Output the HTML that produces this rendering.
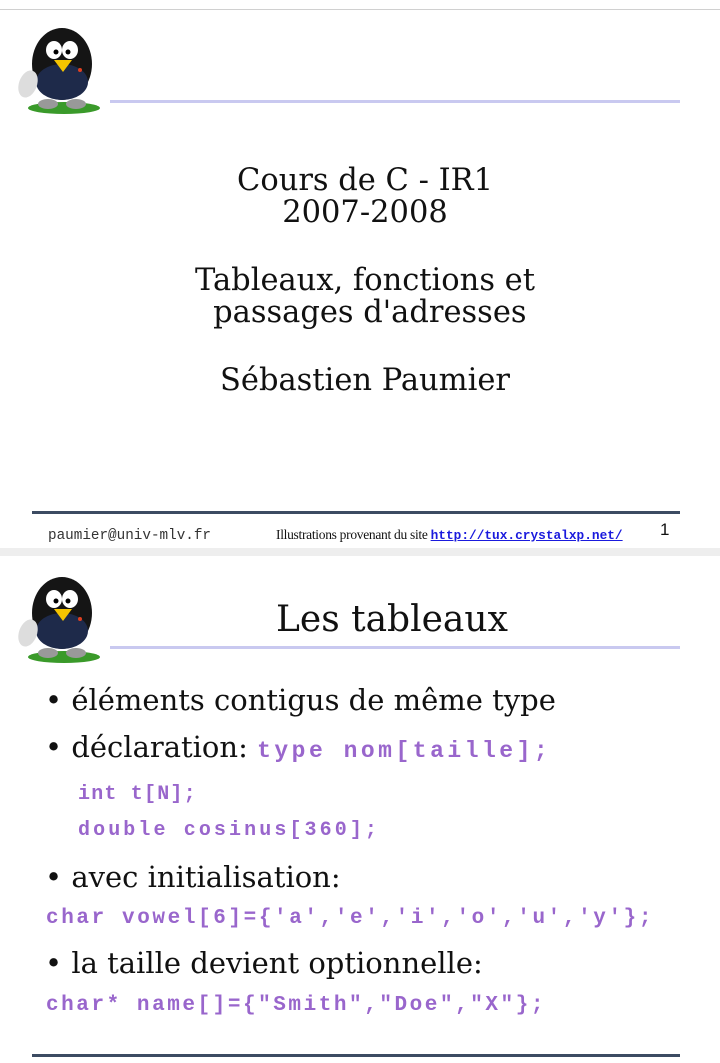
<!DOCTYPE html>
<html><head><meta charset="utf-8"><style>
*{margin:0;padding:0}
body{width:720px;height:1063px;position:relative;background:#fff;overflow:hidden;font-family:"DejaVu Serif","Liberation Serif",serif;color:#111}
.a{position:absolute;white-space:nowrap;line-height:32px}
.c{left:0;width:730px;text-align:center;font-size:30.5px}
.b{font-size:29px}
.m{font-family:"Liberation Mono",monospace;font-weight:bold;color:#9966cc}
.hl{position:absolute;left:110px;width:570px;height:3px;background:#c9c9f0}
.dl{position:absolute;left:32px;width:648px;height:3px;background:#3c4b62}
</style></head><body>
<div style="position:absolute;left:0;top:9px;width:720px;height:1px;background:#d0d0d0"></div>
<div style="position:absolute;left:0;top:548px;width:720px;height:8px;background:#eeeeee"></div>

<svg style="position:absolute;left:16px;top:20px" width="96" height="96" viewBox="0 0 96 96">
<ellipse cx="48" cy="88" rx="36" ry="6" fill="#3a9a2a"/>
<ellipse cx="46" cy="44" rx="30" ry="36" fill="#151515"/>
<ellipse cx="46" cy="62" rx="26" ry="18" fill="#1e2a4a"/>
<ellipse cx="38" cy="30" rx="8" ry="9" fill="#fff"/><ellipse cx="54" cy="30" rx="8" ry="9" fill="#fff"/>
<circle cx="40" cy="32" r="2.5" fill="#000"/><circle cx="52" cy="32" r="2.5" fill="#000"/>
<path d="M38 40 L56 40 L47 52 Z" fill="#f5c400"/>
<ellipse cx="12" cy="64" rx="9" ry="14" fill="#ddd" transform="rotate(20 12 64)"/>
<ellipse cx="32" cy="84" rx="10" ry="5" fill="#999"/><ellipse cx="60" cy="84" rx="10" ry="5" fill="#999"/>
<circle cx="64" cy="50" r="2" fill="#e04020"/>
</svg>
<div class="hl" style="top:100px"></div>

<div class="a c" style="top:165px">Cours de C - IR1</div>
<div class="a c" style="top:197px">2007-2008</div>
<div class="a c" style="top:265px">Tableaux, fonctions et</div>
<div class="a c" style="top:297px">&nbsp;passages d'adresses</div>
<div class="a c" style="top:365px">Sébastien Paumier</div>

<div class="dl" style="top:511px"></div>
<div class="a" style="left:48px;top:520px;font-family:'Liberation Mono',monospace;font-size:14.3px;color:#333">paumier@univ-mlv.fr</div>
<div class="a" style="left:276px;top:519px;font-family:'Liberation Serif',serif;font-size:13.5px;color:#111;letter-spacing:-0.3px">Illustrations provenant du site <span style="font-family:'Liberation Mono',monospace;font-weight:bold;font-size:12.8px;letter-spacing:0;color:#1a1add;text-decoration:underline">http://tux.crystalxp.net/</span></div>
<div class="a" style="left:660px;top:514px;font-family:'Liberation Sans',sans-serif;font-size:17px">1</div>

<svg style="position:absolute;left:16px;top:568px" width="96" height="98" viewBox="0 0 96 96">
<ellipse cx="48" cy="88" rx="36" ry="6" fill="#3a9a2a"/>
<ellipse cx="46" cy="44" rx="30" ry="36" fill="#151515"/>
<ellipse cx="46" cy="62" rx="26" ry="18" fill="#1e2a4a"/>
<ellipse cx="38" cy="30" rx="8" ry="9" fill="#fff"/><ellipse cx="54" cy="30" rx="8" ry="9" fill="#fff"/>
<circle cx="40" cy="32" r="2.5" fill="#000"/><circle cx="52" cy="32" r="2.5" fill="#000"/>
<path d="M38 40 L56 40 L47 52 Z" fill="#f5c400"/>
<ellipse cx="12" cy="64" rx="9" ry="14" fill="#ddd" transform="rotate(20 12 64)"/>
<ellipse cx="32" cy="84" rx="10" ry="5" fill="#999"/><ellipse cx="60" cy="84" rx="10" ry="5" fill="#999"/>
<circle cx="64" cy="50" r="2" fill="#e04020"/>
</svg>
<div class="hl" style="top:646px"></div>
<div class="a" style="left:276px;top:600px;font-size:36px;line-height:40px">Les tableaux</div>

<div class="a b" style="left:45px;top:684px">• éléments contigus de même type</div>
<div class="a b" style="left:45px;top:731px">• déclaration: <span class="m" style="font-size:23px;letter-spacing:3.5px">type nom[taille];</span></div>
<div class="a m" style="left:78px;top:779px;font-size:20px;letter-spacing:1.2px">int t[N];</div>
<div class="a m" style="left:78px;top:815px;font-size:20px;letter-spacing:3.1px">double cosinus[360];</div>
<div class="a b" style="left:45px;top:861px">• avec initialisation:</div>
<div class="a m" style="left:46px;top:903px;font-size:21px;letter-spacing:2.6px">char vowel[6]={'a','e','i','o','u','y'};</div>
<div class="a b" style="left:45px;top:947px">• la taille devient optionnelle:</div>
<div class="a m" style="left:46px;top:990px;font-size:21px;letter-spacing:2.55px">char* name[]={"Smith","Doe","X"};</div>

<div class="dl" style="top:1054px"></div>
</body></html>
